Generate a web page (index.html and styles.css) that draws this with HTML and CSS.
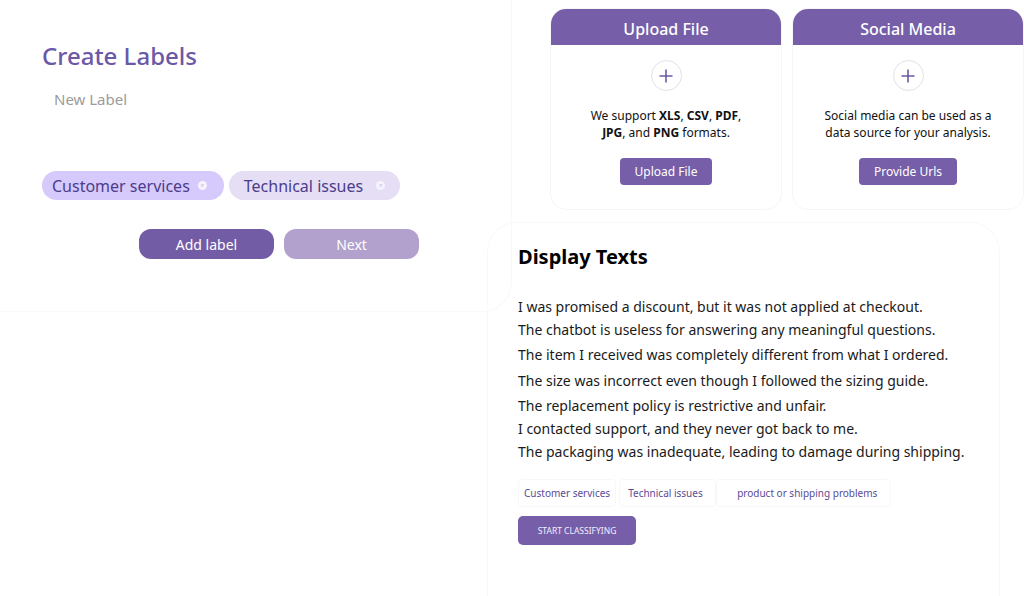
FILE: index.html
```html
<!DOCTYPE html>
<html lang="en">
<head>
<meta charset="utf-8">
<title>Labels</title>
<link rel="stylesheet" href="styles.css">
</head>
<body>
<div class="page">
  <section class="labels-card">
    <h1 class="labels-title">Create Labels</h1>
    <div class="new-label">New Label</div>
    <div class="chips">
      <span class="chip chip-a">Customer services <span class="chip-x">×</span></span>
      <span class="chip chip-b">Technical issues <span class="chip-x">×</span></span>
    </div>
    <div class="actions">
      <button class="btn btn-primary">Add label</button>
      <button class="btn btn-muted">Next</button>
    </div>
  </section>

  <div class="right-col">
    <div class="sources">
      <div class="source-card">
        <div class="source-head">Upload File</div>
        <div class="source-body">
          <div class="plus-circle"><svg width="14" height="14" viewBox="0 0 14 14"><path d="M7 0.5V13.5M0.5 7H13.5" stroke="#6b58a6" stroke-width="1.6"/></svg></div>
          <p class="source-text">We support <b>XLS</b>, <b>CSV</b>, <b>PDF</b>,<br><b>JPG</b>, and <b>PNG</b> formats.</p>
          <button class="source-btn">Upload File</button>
        </div>
      </div>
      <div class="source-card">
        <div class="source-head">Social Media</div>
        <div class="source-body">
          <div class="plus-circle"><svg width="14" height="14" viewBox="0 0 14 14"><path d="M7 0.5V13.5M0.5 7H13.5" stroke="#6b58a6" stroke-width="1.6"/></svg></div>
          <p class="source-text">Social media can be used as a<br>data source for your analysis.</p>
          <button class="source-btn">Provide Urls</button>
        </div>
      </div>
    </div>

    <section class="display-card">
      <h2 class="display-title">Display Texts</h2>
      <ul class="texts">
        <li class="t1">I was promised a discount, but it was not applied at checkout.</li>
        <li class="t2">The chatbot is useless for answering any meaningful questions.</li>
        <li class="t3">The item I received was completely different from what I ordered.</li>
        <li class="t4">The size was incorrect even though I followed the sizing guide.</li>
        <li class="t5">The replacement policy is restrictive and unfair.</li>
        <li class="t6">I contacted support, and they never got back to me.</li>
        <li class="t7">The packaging was inadequate, leading to damage during shipping.</li>
      </ul>
      <div class="tags">
        <span class="tag tag-1">Customer services</span>
        <span class="tag tag-2">Technical issues</span>
        <span class="tag tag-3">product or shipping problems</span>
      </div>
      <button class="classify-btn">START CLASSIFYING</button>
    </section>
  </div>
</div>
</body>
</html>
```

FILE: styles.css
```css
* { box-sizing: border-box; }
html, body { margin: 0; padding: 0; }
body {
  background: #ffffff;
  font-family: "Noto Sans", "DejaVu Sans", sans-serif;
  width: 1024px;
  height: 596px;
  overflow: hidden;
}
.page {
  display: flex;
  align-items: flex-start;
}

/* Left card */
.labels-card {
  width: 512px;
  height: 312px;
  flex: none;
  border: 1px solid #f9f9fa;
  border-top: none;
  border-left: none;
  border-radius: 0 0 30px 0;
  padding: 41px 0 0 42px;
}
.labels-title {
  margin: 0;
  font-size: 24px;
  font-weight: 500;
  color: #6b58a6;
  line-height: 30px;
}
.new-label {
  margin: 18px 0 0 12px;
  font-size: 15px;
  color: #9b9b9b;
  line-height: 20px;
}
.chips {
  display: flex;
  gap: 5px;
  margin-top: 62px;
}
.chip {
  display: inline-flex;
  align-items: center;
  height: 29px;
  border-radius: 15px;
  font-size: 16px;
  color: #4b3d8c;
}
.chip-a { background: #d6c9fb; padding: 0 17px 0 10px; }
.chip-b { background: #e5def5; padding: 0 15px 0 15px; }
.chip-x {
  display: inline-flex;
  align-items: center;
  justify-content: center;
  width: 9px;
  height: 9px;
  border-radius: 50%;
  background: #f6f2ff;
  color: #c7bde6;
  font-size: 7px;
  line-height: 1;
  margin-left: 8px;
}
.chip-b .chip-x { margin-left: 13px; }
.actions {
  display: flex;
  gap: 10px;
  margin: 29px 0 0 97px;
}
.btn {
  width: 135px;
  height: 30px;
  border: none;
  border-radius: 12px;
  font-family: inherit;
  font-size: 14px;
  color: #ffffff;
  padding: 0;
}
.btn-primary { background: #735ca6; }
.btn-muted { background: #b1a1cc; }

/* Right column */
.right-col {
  flex: 1;
  display: flex;
  flex-direction: column;
  margin-left: -25px;
}
.sources {
  display: flex;
  gap: 10px;
  padding: 8px 0 0 63px;
}
.source-card {
  width: 232px;
  height: 202px;
  flex: none;
  border: 1px solid #f6f6f8;
  border-radius: 16px;
  overflow: hidden;
  background: #fff;
}
.source-head {
  height: 36px;
  background: #765ea8;
  color: #ffffff;
  font-size: 16px;
  font-weight: 500;
  text-align: center;
  line-height: 40px;
}
.source-body {
  display: flex;
  flex-direction: column;
  align-items: center;
  padding-top: 15px;
}
.plus-circle {
  width: 31px;
  height: 31px;
  border-radius: 50%;
  border: 1px solid #e2e0ea;
  display: flex;
  align-items: center;
  justify-content: center;
}
.source-text {
  margin: 17px 0 0;
  font-size: 12px;
  line-height: 16.5px;
  color: #111;
  text-align: center;
}
.source-text b { font-weight: 700; }
.source-btn {
  margin-top: 17px;
  height: 27px;
  padding: 0 15px;
  border: none;
  border-radius: 4px;
  background: #765ea8;
  color: #ffffff;
  font-family: inherit;
  font-size: 12px;
}

/* Display card */
.display-card {
  width: 513px;
  height: 374px;
  margin-top: 12px;
  border: 1px solid #f9f9fa;
  border-bottom: none;
  border-radius: 30px 30px 0 0;
  padding: 21px 0 0 30px;
}
.display-title {
  margin: 0;
  font-size: 20px;
  font-weight: 700;
  color: #000;
  line-height: 26px;
}
.texts {
  list-style: none;
  margin: 27px 0 0;
  padding: 0;
  font-size: 14px;
  color: #1a1a1a;
}
.texts li { line-height: 20px; }
.texts .t2 { margin-top: 3px; }
.texts .t3 { margin-top: 5px; }
.texts .t4 { margin-top: 6px; }
.texts .t5 { margin-top: 5px; }
.texts .t6 { margin-top: 3px; }
.texts .t7 { margin-top: 3px; }
.tags {
  display: flex;
  margin-top: 17px;
}
.tag {
  height: 28px;
  display: inline-flex;
  align-items: center;
  font-size: 10px;
  color: #5a4b98;
  border: 1px solid #f8f8fa;
  border-radius: 4px;
}
.tag-1 { padding: 0 5px; }
.tag-2 { padding: 0 8px; margin-left: 3px; width: 97px; }
.tag-3 { padding: 0 10px 0 20px; width: 175px; }
.classify-btn {
  display: block;
  margin-top: 9px;
  width: 118px;
  height: 29px;
  border: none;
  border-radius: 5px;
  background: #765ea8;
  color: #f4f0ff;
  font-family: inherit;
  font-size: 8.5px;
  padding: 0;
}
```
